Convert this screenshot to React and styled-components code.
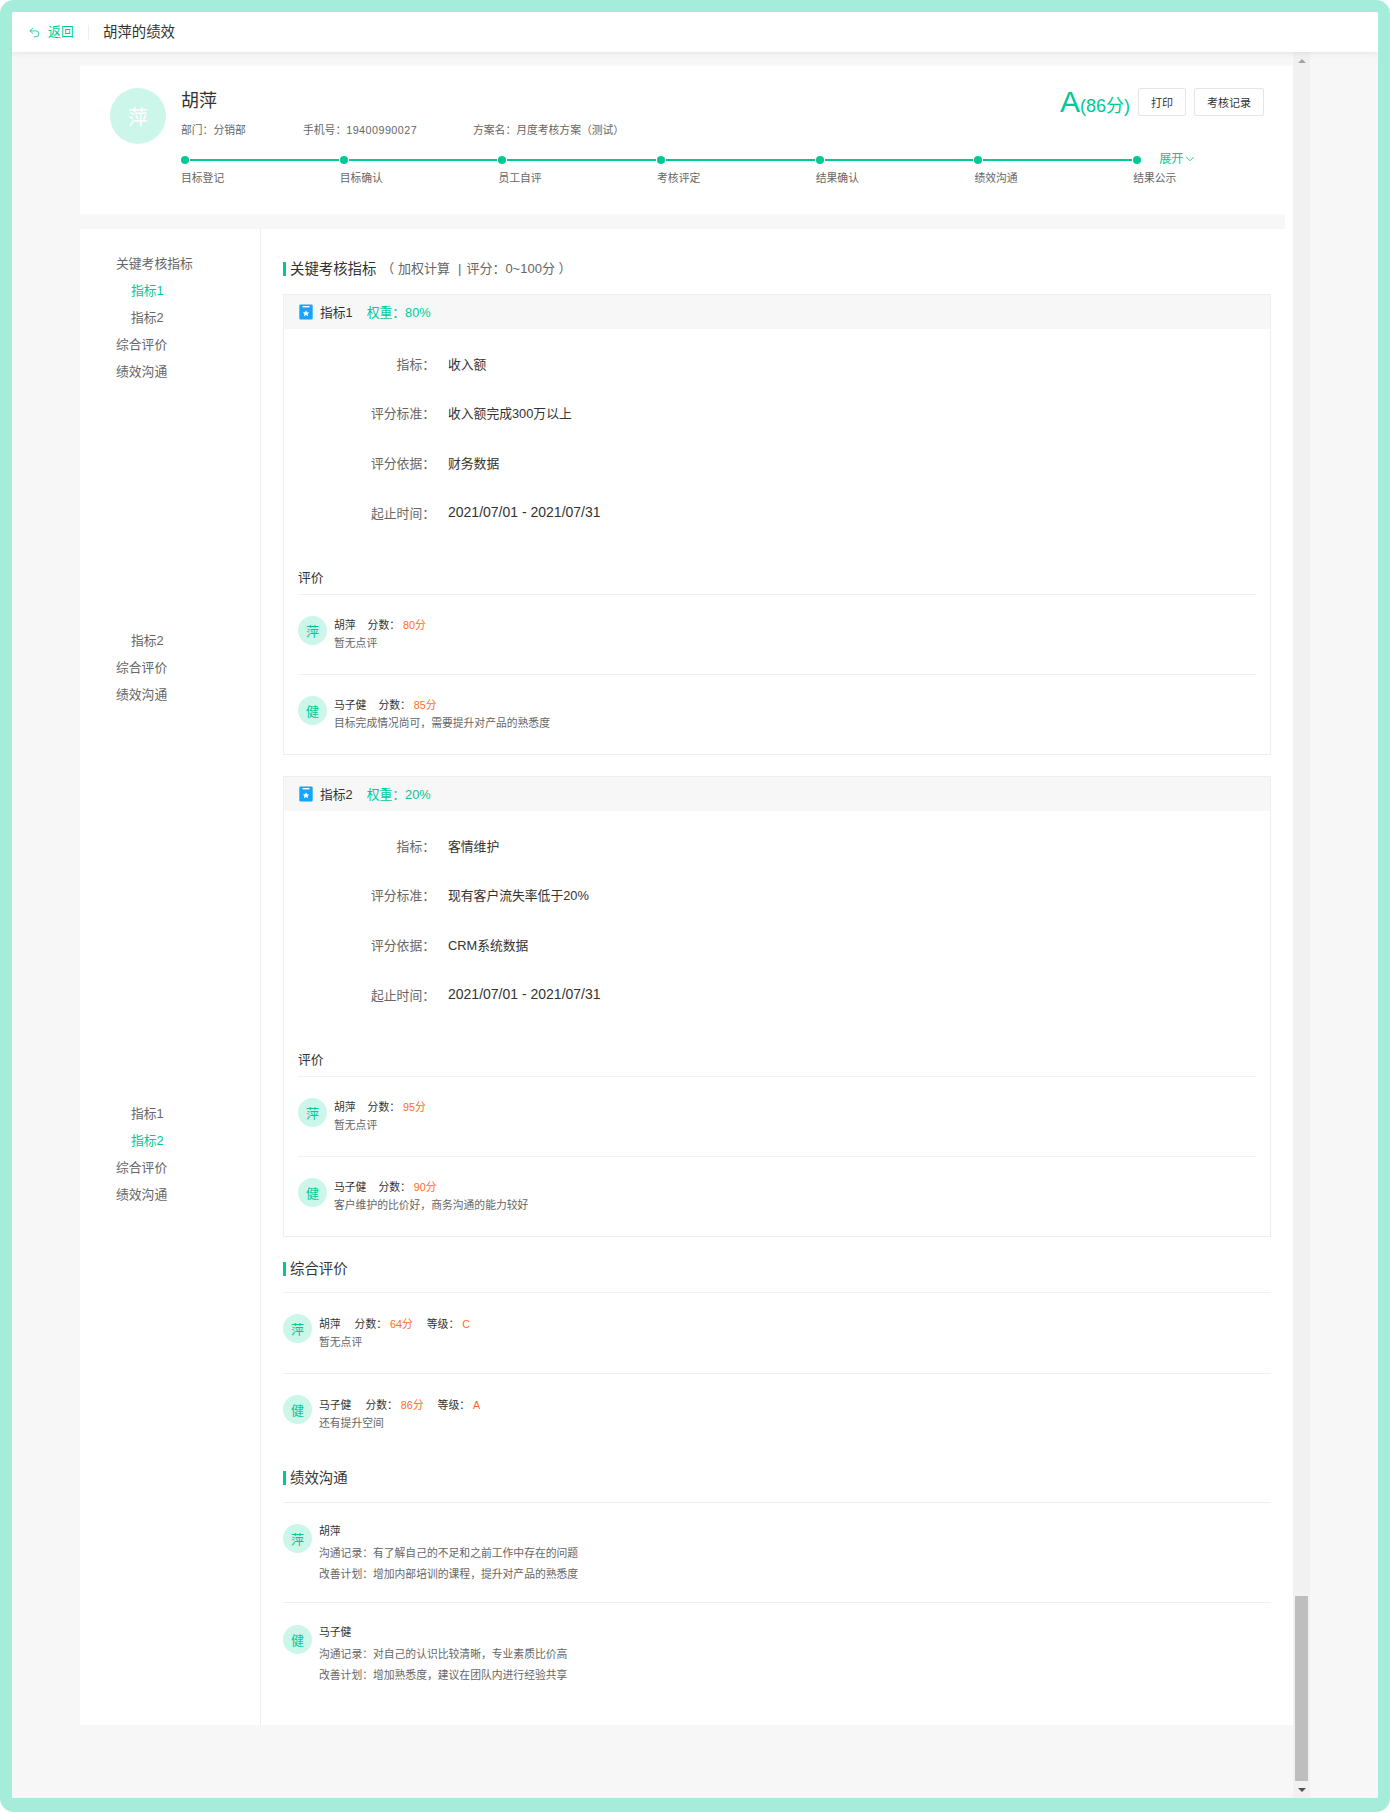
import React from 'react';
import styled, { createGlobalStyle } from 'styled-components';
import { Undo2, ChevronDown } from 'lucide-react';

const GREEN = '#00c997';
const FONT = '"Liberation Sans", "Noto Sans CJK SC", sans-serif';

const Global = createGlobalStyle`
  * { box-sizing: border-box; }
  html, body { margin: 0; padding: 0; background: #fff; }
  body { font-family: ${FONT}; color: #333; }
`;

const Frame = styled.div`
  width: 1390px;
  height: 1812px;
  border: 12px solid #a5ecdb;
  border-bottom-width: 14px;
  border-radius: 14px;
  display: flex;
  flex-direction: column;
  background: #f7f7f7;
  overflow: hidden;
`;

const Header = styled.header`
  flex: 0 0 40px;
  display: flex;
  align-items: center;
  padding-left: 16px;
  background: #fff;
  box-shadow: 0 2px 6px rgba(0, 0, 0, 0.07);
  position: relative;
  z-index: 2;
`;
const BackLink = styled.a`
  display: flex;
  align-items: center;
  gap: 7px;
  color: ${GREEN};
  font-size: 13px;
  line-height: 20px;
`;
const HeaderDivider = styled.span`
  width: 1px;
  height: 15px;
  background: #eee;
  margin: 0 14px 0 14px;
`;
const HeaderTitle = styled.span`
  font-size: 14.4px;
  line-height: 20px;
  color: #333;
`;

const Body = styled.div`
  flex: 1;
  display: flex;
  min-height: 0;
`;
const Viewport = styled.div`
  flex: 0 0 1281px;
  padding: 14px 0 0 68px;
`;
const Gutter = styled.div`
  flex: 1;
`;
const ScrollTrack = styled.div`
  flex: 0 0 17px;
  display: flex;
  flex-direction: column;
  align-items: center;
  background: #f1f1f1;
`;
const ScrollArrow = styled.div`
  flex: 0 0 17px;
  width: 100%;
  display: flex;
  align-items: center;
  justify-content: center;
  &::before {
    content: '';
    border-left: 4px solid transparent;
    border-right: 4px solid transparent;
    ${p => p.$down
      ? 'border-top: 4px solid #505050;'
      : 'border-bottom: 4px solid #a3a3a3;'}
  }
`;
const ScrollSpace = styled.div`
  flex: 1;
`;
const ScrollThumb = styled.div`
  flex: 0 0 185px;
  width: 13px;
  background: #bebebe;
`;

const Panel = styled.div`
  width: 1213px;
  background: #fff;
`;

const TopCard = styled.section`
  height: 148px;
  padding: 22px 29px 0 30px;
`;
const TopRow = styled.div`
  display: flex;
  height: 56px;
`;
const BigAvatar = styled.div`
  flex: 0 0 56px;
  height: 56px;
  border-radius: 50%;
  background: #ccf6ea;
  color: #fff;
  font-size: 20px;
  display: flex;
  align-items: center;
  justify-content: center;
`;
const Person = styled.div`
  flex: 1;
  margin-left: 15px;
`;
const PersonName = styled.div`
  font-size: 18px;
  line-height: 26px;
  color: #333;
`;
const InfoRow = styled.div`
  display: flex;
  margin-top: 7px;
  font-size: 10.8px;
  line-height: 18px;
  color: #666;
`;
const InfoItem = styled.span`
  width: ${p => p.$w}px;
`;
const PhoneNumber = styled.span`
  letter-spacing: 0.45px;
`;
const ScoreBox = styled.div`
  display: flex;
  align-items: flex-start;
`;
const Grade = styled.div`
  color: ${GREEN};
  font-size: 30px;
  line-height: 30px;
  margin: -1px 8px 0 0;
  white-space: nowrap;
  small {
    font-size: 18px;
  }
`;
const Btn = styled.button`
  height: 28px;
  width: ${p => p.$w}px;
  margin-left: ${p => p.$ml || 0}px;
  padding: 0;
  background: #fff;
  border: 1px solid #e5e5e5;
  border-radius: 2px;
  font: 11px ${FONT};
  color: #333;
`;
const Stepper = styled.div`
  display: flex;
  margin: 12px 0 0 71px;
`;
const Step = styled.div`
  flex: ${p => (p.$last ? '1' : '0 0 158.7px')};
`;
const Track = styled.div`
  display: flex;
  align-items: center;
  height: 8px;
`;
const Dot = styled.span`
  flex: 0 0 8px;
  height: 8px;
  border-radius: 50%;
  background: ${GREEN};
`;
const Line = styled.span`
  flex: 1;
  height: 2px;
  margin: 0 1px;
  background: ${GREEN};
`;
const Toggle = styled.span`
  display: flex;
  align-items: center;
  margin: -2px 0 0 18px;
  color: ${GREEN};
  font-size: 12px;
  line-height: 14px;
`;
const StepLabel = styled.div`
  font-size: 10.8px;
  line-height: 18px;
  margin-top: 5px;
  color: #666;
`;

const Strip = styled.div`
  width: 1205px;
  height: 15px;
  background: #f7f7f7;
`;

const Main = styled.div`
  display: flex;
  height: 1496px;
`;
const Sidebar = styled.nav`
  flex: 0 0 181px;
  border-right: 1px solid #eee;
  padding-top: 21px;
`;
const NavGroup = styled.div`
  margin-top: ${p => p.$mt || 0}px;
`;
const NavItem = styled.div`
  height: 27px;
  line-height: 27px;
  font-size: 12.8px;
  padding-left: ${p => (p.$sub ? 51 : 36)}px;
  color: ${p => (p.$active ? GREEN : '#666')};
`;
const Content = styled.div`
  flex: 1;
  padding: 30px 22px 0;
`;
const SectionTitle = styled.h2`
  display: flex;
  align-items: center;
  margin: ${p => p.$mt || 0}px 0 0;
  padding-bottom: ${p => p.$pb || 0}px;
  border-bottom: ${p => (p.$pb ? '1px solid #f0f0f0' : '0')};
  font-size: 14.4px;
  font-weight: 400;
  line-height: 20px;
  color: #333;
  &::before {
    content: '';
    width: 3px;
    height: 14px;
    margin-right: 4px;
    background: ${GREEN};
  }
`;
const TitleNote = styled.span`
  color: #666;
  font-size: 13px;
  margin-left: 5px;
  white-space: pre;
`;
const TitlePipe = styled.span`
  margin: 0 5px 0 8px;
`;
const Card = styled.article`
  margin-top: ${p => p.$mt}px;
  height: 461px;
  border: 1px solid #eee;
`;
const CardHeader = styled.div`
  height: 34px;
  display: flex;
  align-items: center;
  padding: 0 0 2px 15px;
  background: #f7f7f7;
  font-size: 12.8px;
  color: #333;
`;
const Weight = styled.span`
  margin-left: 14px;
  color: ${GREEN};
`;
const BadgeIcon = styled.svg`
  width: 14px;
  height: 16px;
  margin: 2px 7px 0 0;
`;
const CardBody = styled.div`
  padding: 10px 14px 0;
`;
const FieldRow = styled.div`
  display: flex;
  align-items: center;
  height: 49.67px;
  padding-bottom: 1px;
  font-size: 12.8px;
`;
const FieldLabel = styled.span`
  width: 137px;
  text-align: right;
  color: #666;
`;
const FieldValue = styled.span`
  margin-left: 13px;
  color: #333;
  font-size: ${p => (p.$date ? '14px' : 'inherit')};
`;
const EvalTitle = styled.div`
  margin-top: 30px;
  padding-bottom: 6px;
  border-bottom: 1px solid #f0f0f0;
  font-size: 12.8px;
  line-height: 20px;
  color: #333;
`;
const Comment = styled.div`
  display: flex;
  gap: 7px;
  padding: ${p => p.$pt}px 0 ${p => p.$pb}px;
  border-bottom: ${p => (p.$last ? '0' : '1px solid #f0f0f0')};
`;
const SmallAvatar = styled.div`
  flex: 0 0 29px;
  height: 29px;
  border-radius: 50%;
  background: #ccf6ea;
  color: ${GREEN};
  font-size: 13px;
  display: flex;
  align-items: center;
  justify-content: center;
`;
const CommentText = styled.div`
  font-size: 10.8px;
  padding-top: ${p => p.$pt || 0}px;
`;
const Meta = styled.div`
  display: flex;
  gap: ${p => p.$gap}px;
  line-height: 16px;
  color: #333;
`;
const Value = styled.span`
  margin-left: 3px;
  color: #ff6a2a;
`;
const Remark = styled.div`
  line-height: 20px;
  color: #666;
`;
const CommName = styled.div`
  line-height: 14px;
  margin-bottom: 5px;
  color: #333;
`;
const CommLine = styled.div`
  line-height: 21px;
  color: #666;
`;

const Badge = () => (
  <BadgeIcon viewBox="0 0 14 16">
    <path d="M1.5 0.5H12.5A1.2 1.2 0 0 1 13.7 1.7V14.3A1.2 1.2 0 0 1 12.5 15.5H1.5A1.2 1.2 0 0 1 0.3 14.3V1.7A1.2 1.2 0 0 1 1.5 0.5Z" fill="#14a5ff" />
    <rect x="3.5" y="2" width="7" height="1.4" fill="#fff" />
    <path d="M7 6.2L8 8.2L10.2 8.5L8.6 10L9 12.2L7 11.1L5 12.2L5.4 10L3.8 8.5L6 8.2Z" fill="#fff" />
  </BadgeIcon>
);

const steps = ['目标登记', '目标确认', '员工自评', '考核评定', '结果确认', '绩效沟通', '结果公示'];

const fields = [
  {
    name: '指标1', weight: '80%', mt: 15,
    rows: ['收入额', '收入额完成300万以上', '财务数据', '2021/07/01 - 2021/07/31'],
    comments: [
      { who: '胡萍', ch: '萍', score: '80分', text: '暂无点评' },
      { who: '马子健', ch: '健', score: '85分', text: '目标完成情况尚可，需要提升对产品的熟悉度' },
    ],
  },
  {
    name: '指标2', weight: '20%', mt: 21,
    rows: ['客情维护', '现有客户流失率低于20%', 'CRM系统数据', '2021/07/01 - 2021/07/31'],
    comments: [
      { who: '胡萍', ch: '萍', score: '95分', text: '暂无点评' },
      { who: '马子健', ch: '健', score: '90分', text: '客户维护的比价好，商务沟通的能力较好' },
    ],
  },
];
const labels = ['指标：', '评分标准：', '评分依据：', '起止时间：'];

const KpiCard = ({ data }) => (
  <Card $mt={data.mt}>
    <CardHeader>
      <Badge />
      {data.name}
      <Weight>权重：{data.weight}</Weight>
    </CardHeader>
    <CardBody>
      {data.rows.map((v, i) => (
        <FieldRow key={labels[i]}>
          <FieldLabel>{labels[i]}</FieldLabel>
          <FieldValue $date={i === 3}>{v}</FieldValue>
        </FieldRow>
      ))}
      <EvalTitle>评价</EvalTitle>
      {data.comments.map((c, i) => (
        <Comment key={c.who} $pt={21} $pb={21} $last={i === 1}>
          <SmallAvatar>{c.ch}</SmallAvatar>
          <CommentText $pt={1}>
            <Meta $gap={12}>
              <span>{c.who}</span>
              <span>分数：<Value>{c.score}</Value></span>
            </Meta>
            <Remark>{c.text}</Remark>
          </CommentText>
        </Comment>
      ))}
    </CardBody>
  </Card>
);

export default function App() {
  return (
    <>
      <Global />
      <Frame>
        <Header>
          <BackLink>
            <Undo2 size={13} strokeWidth={1.5} />
            返回
          </BackLink>
          <HeaderDivider />
          <HeaderTitle>胡萍的绩效</HeaderTitle>
        </Header>
        <Body>
          <Viewport>
            <Panel>
              <TopCard>
                <TopRow>
                  <BigAvatar>萍</BigAvatar>
                  <Person>
                    <PersonName>胡萍</PersonName>
                    <InfoRow>
                      <InfoItem $w={122}>部门：分销部</InfoItem>
                      <InfoItem $w={170}>手机号：<PhoneNumber>19400990027</PhoneNumber></InfoItem>
                      <InfoItem $w={220}>方案名：月度考核方案（测试）</InfoItem>
                    </InfoRow>
                  </Person>
                  <ScoreBox>
                    <Grade>A<small>(86分)</small></Grade>
                    <Btn $w={48}>打印</Btn>
                    <Btn $w={70} $ml={8}>考核记录</Btn>
                  </ScoreBox>
                </TopRow>
                <Stepper>
                  {steps.map((s, i) => {
                    const last = i === steps.length - 1;
                    return (
                      <Step key={s} $last={last}>
                        <Track>
                          <Dot />
                          {last ? (
                            <Toggle>展开<ChevronDown size={14} strokeWidth={1.5} /></Toggle>
                          ) : (
                            <Line />
                          )}
                        </Track>
                        <StepLabel>{s}</StepLabel>
                      </Step>
                    );
                  })}
                </Stepper>
              </TopCard>
              <Strip />
              <Main>
                <Sidebar>
                  <NavGroup>
                    <NavItem>关键考核指标</NavItem>
                    <NavItem $sub $active>指标1</NavItem>
                    <NavItem $sub>指标2</NavItem>
                    <NavItem>综合评价</NavItem>
                    <NavItem>绩效沟通</NavItem>
                  </NavGroup>
                  <NavGroup $mt={242}>
                    <NavItem $sub>指标2</NavItem>
                    <NavItem>综合评价</NavItem>
                    <NavItem>绩效沟通</NavItem>
                  </NavGroup>
                  <NavGroup $mt={392}>
                    <NavItem $sub>指标1</NavItem>
                    <NavItem $sub $active>指标2</NavItem>
                    <NavItem>综合评价</NavItem>
                    <NavItem>绩效沟通</NavItem>
                  </NavGroup>
                </Sidebar>
                <Content>
                  <SectionTitle>
                    关键考核指标
                    <TitleNote>（ 加权计算<TitlePipe>|</TitlePipe>评分：0~100分 ）</TitleNote>
                  </SectionTitle>
                  {fields.map(f => <KpiCard key={f.name} data={f} />)}

                  <SectionTitle $mt={22} $pb={13}>综合评价</SectionTitle>
                  <Comment $pt={21} $pb={21}>
                    <SmallAvatar>萍</SmallAvatar>
                    <CommentText $pt={2}>
                      <Meta $gap={14}>
                        <span>胡萍</span>
                        <span>分数：<Value>64分</Value></span>
                        <span>等级：<Value>C</Value></span>
                      </Meta>
                      <Remark>暂无点评</Remark>
                    </CommentText>
                  </Comment>
                  <Comment $pt={21} $pb={21} $last>
                    <SmallAvatar>健</SmallAvatar>
                    <CommentText $pt={2}>
                      <Meta $gap={14}>
                        <span>马子健</span>
                        <span>分数：<Value>86分</Value></span>
                        <span>等级：<Value>A</Value></span>
                      </Meta>
                      <Remark>还有提升空间</Remark>
                    </CommentText>
                  </Comment>

                  <SectionTitle $mt={14} $pb={14}>绩效沟通</SectionTitle>
                  <Comment $pt={21} $pb={17}>
                    <SmallAvatar>萍</SmallAvatar>
                    <CommentText>
                      <CommName>胡萍</CommName>
                      <CommLine>沟通记录：有了解自己的不足和之前工作中存在的问题</CommLine>
                      <CommLine>改善计划：增加内部培训的课程，提升对产品的熟悉度</CommLine>
                    </CommentText>
                  </Comment>
                  <Comment $pt={22} $pb={17} $last>
                    <SmallAvatar>健</SmallAvatar>
                    <CommentText>
                      <CommName>马子健</CommName>
                      <CommLine>沟通记录：对自己的认识比较清晰，专业素质比价高</CommLine>
                      <CommLine>改善计划：增加熟悉度，建议在团队内进行经验共享</CommLine>
                    </CommentText>
                  </Comment>
                </Content>
              </Main>
            </Panel>
          </Viewport>
          <ScrollTrack>
            <ScrollArrow />
            <ScrollSpace />
            <ScrollThumb />
            <ScrollArrow $down />
          </ScrollTrack>
          <Gutter />
        </Body>
      </Frame>
    </>
  );
}
